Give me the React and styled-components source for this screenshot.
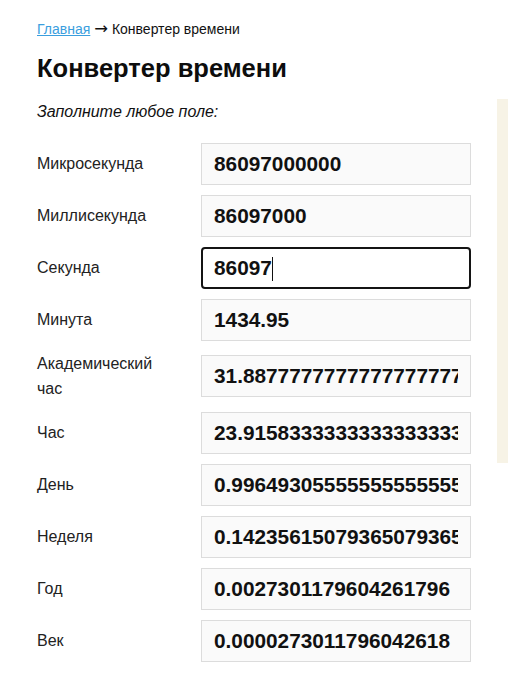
import React, { useState, useRef, useEffect, useLayoutEffect } from "react";
import styled, { createGlobalStyle } from "styled-components";

const GlobalStyle = createGlobalStyle`
  html, body {
    margin: 0;
    padding: 0;
    overflow: hidden;
    background: #fff;
  }
  body {
    font-family: "Liberation Sans", Arial, sans-serif;
    color: #111;
  }
`;

const FIELD_FONT = `700 20.8px "Liberation Sans", Arial, sans-serif`;

const Page = styled.div`
  padding: 19px 0 0 37px;
`;

const Breadcrumbs = styled.nav`
  font-size: 14px;
  line-height: 20px;
  color: #111;
`;

const CrumbLink = styled.a`
  color: #3a9ede;
  text-decoration: underline;
`;

const Arrow = styled.span`
  font-family: "DejaVu Sans", sans-serif;
  font-size: 16.5px;
  line-height: 1;
`;

const Title = styled.h1`
  margin: 14px 0 0;
  font-size: 25.5px;
  line-height: 30px;
  font-weight: 700;
  color: #0d0d0d;
`;

const Layout = styled.div`
  display: flex;
  align-items: flex-start;
  gap: 26px;
  margin-top: 16px;
`;

const Form = styled.form`
  width: 434px;
  flex-shrink: 0;
`;

const Hint = styled.p`
  margin: 0 0 13px;
  font-size: 16px;
  line-height: 25.6px;
  font-style: italic;
  color: #111;
`;

const Row = styled.label`
  display: grid;
  grid-template-columns: 164px 270px;
  align-items: center;
  padding: 5px 0;
`;

const Caption = styled.span`
  padding-right: 30px;
  font-size: 16px;
  line-height: 25.6px;
  color: #222;
`;

const FieldBox = styled.span`
  position: relative;
  display: block;
  width: 270px;
  height: 42px;
`;

const Field = styled.input`
  box-sizing: border-box;
  width: 270px;
  height: 42px;
  padding: 0 12px;
  border: 1px solid #dcdcdc;
  border-radius: 0;
  background: #fafafa;
  font: ${FIELD_FONT};
  color: #111;
  outline: none;

  &:focus {
    padding: 0 11px;
    border: 2px solid #141414;
    border-radius: 4px;
    background: #fff;
    caret-color: transparent;
  }
`;

/* steady text cursor drawn over the focused field */
const Caret = styled.span`
  position: absolute;
  top: 10px;
  width: 1px;
  height: 24px;
  background: #111;
  pointer-events: none;
`;

const Aside = styled.aside`
  width: 300px;
  height: 364px;
  flex-shrink: 0;
  background: #f7f3e6;
`;

// seconds per unit
const UNITS = [
  { key: "us", name: "Микросекунда", k: 0.000001 },
  { key: "ms", name: "Миллисекунда", k: 0.001 },
  { key: "s", name: "Секунда", k: 1 },
  { key: "min", name: "Минута", k: 60 },
  { key: "ah", name: "Академический час", k: 2700 },
  { key: "h", name: "Час", k: 3600 },
  { key: "d", name: "День", k: 86400 },
  { key: "w", name: "Неделя", k: 604800 },
  { key: "y", name: "Год", k: 31536000 },
  { key: "c", name: "Век", k: 3153600000 },
];

const INITIAL = {
  us: "86097000000",
  ms: "86097000",
  s: "86097",
  min: "1434.95",
  ah: "31.887777777777777777777778",
  h: "23.915833333333333333333333",
  d: "0.99649305555555555555555556",
  w: "0.14235615079365079365079365",
  y: "0.0027301179604261796",
  c: "0.0000273011796042618",
};

let measureCtx = null;
function textWidth(text) {
  if (!measureCtx) measureCtx = document.createElement("canvas").getContext("2d");
  measureCtx.font = FIELD_FONT;
  return measureCtx.measureText(text).width;
}

export default function App() {
  const [values, setValues] = useState(INITIAL);
  const [focused, setFocused] = useState(null);
  const [caretX, setCaretX] = useState(0);
  const active = useRef(null);

  useEffect(() => {
    const el = active.current;
    if (el) {
      el.focus();
      const n = el.value.length;
      el.setSelectionRange(n, n);
    }
  }, []);

  useLayoutEffect(() => {
    if (!focused) return;
    const measure = () => setCaretX(13 + Math.round(textWidth(values[focused])));
    measure();
    if (document.fonts && document.fonts.ready) document.fonts.ready.then(measure);
  }, [focused, values]);

  const update = (unit, raw) => {
    const num = parseFloat(raw.replace(",", "."));
    if (raw === "" || isNaN(num)) {
      setValues((v) => ({ ...v, [unit.key]: raw }));
      return;
    }
    const seconds = num * unit.k;
    const next = {};
    UNITS.forEach((u) => {
      next[u.key] = u.key === unit.key ? raw : String(seconds / u.k);
    });
    setValues(next);
  };

  return (
    <>
      <GlobalStyle />
      <Page>
        <Breadcrumbs>
          <CrumbLink href="#">Главная</CrumbLink> <Arrow>→</Arrow> Конвертер времени
        </Breadcrumbs>
        <Title>Конвертер времени</Title>
        <Layout>
          <Form onSubmit={(e) => e.preventDefault()}>
            <Hint>Заполните любое поле:</Hint>
            {UNITS.map((u) => (
              <Row key={u.key}>
                <Caption>{u.name}</Caption>
                <FieldBox>
                  <Field
                    type="text"
                    ref={u.key === "s" ? active : undefined}
                    value={values[u.key]}
                    onFocus={() => setFocused(u.key)}
                    onBlur={() => setFocused(null)}
                    onChange={(e) => update(u, e.target.value)}
                  />
                  {focused === u.key && caretX < 257 && (
                    <Caret style={{ left: caretX }} />
                  )}
                </FieldBox>
              </Row>
            ))}
          </Form>
          <Aside />
        </Layout>
      </Page>
    </>
  );
}
